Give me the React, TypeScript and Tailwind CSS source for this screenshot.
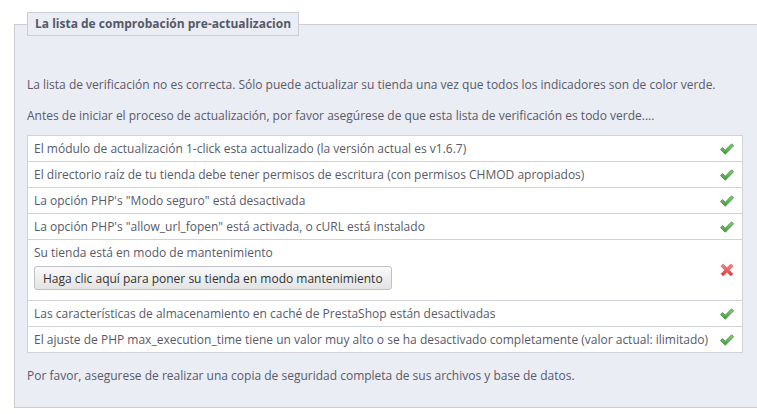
type CheckItem = {
  label: string;
  ok: boolean;
  action?: string;
};

const items: CheckItem[] = [
  { label: "El módulo de actualización 1-click esta actualizado (la versión actual es v1.6.7)", ok: true },
  { label: "El directorio raíz de tu tienda debe tener permisos de escritura (con permisos CHMOD apropiados)", ok: true },
  { label: "La opción PHP's \"Modo seguro\" está desactivada", ok: true },
  { label: "La opción PHP's \"allow_url_fopen\" está activada, o cURL está instalado", ok: true },
  {
    label: "Su tienda está en modo de mantenimiento",
    ok: false,
    action: "Haga clic aquí para poner su tienda en modo mantenimiento",
  },
  { label: "Las características de almacenamiento en caché de PrestaShop están desactivadas", ok: true },
  {
    label: "El ajuste de PHP max_execution_time tiene un valor muy alto o se ha desactivado completamente (valor actual: ilimitado)",
    ok: true,
  },
];

function CheckIcon() {
  return (
    <svg width="16" height="16" viewBox="0 0 16 16">
      <defs>
        <linearGradient id="ok" x1="0" y1="0" x2="0" y2="1">
          <stop offset="0" stopColor="#8fd27c" />
          <stop offset="1" stopColor="#3f9b3a" />
        </linearGradient>
      </defs>
      <path
        d="M1.5 8.6 L3.6 6.6 L6.3 9.2 L12.6 2.8 L14.6 4.8 L6.3 13.2 Z"
        fill="url(#ok)"
        stroke="#3b8a34"
        strokeWidth="0.8"
        strokeLinejoin="round"
      />
    </svg>
  );
}

function CrossIcon() {
  return (
    <svg width="16" height="16" viewBox="0 0 16 16">
      <defs>
        <linearGradient id="ko" x1="0" y1="0" x2="0" y2="1">
          <stop offset="0" stopColor="#f48a8a" />
          <stop offset="1" stopColor="#e03a3a" />
        </linearGradient>
      </defs>
      <path
        d="M2 4.2 L4.2 2 L8 5.8 L11.8 2 L14 4.2 L10.2 8 L14 11.8 L11.8 14 L8 10.2 L4.2 14 L2 11.8 L5.8 8 Z"
        fill="url(#ko)"
        stroke="#d84a4a"
        strokeWidth="0.6"
        strokeLinejoin="round"
      />
    </svg>
  );
}

export default function App() {
  return (
    <div
      className="h-[414px] w-[757px] overflow-hidden bg-white text-[12px] leading-[18px] text-[#585a69]"
      style={{ fontFamily: '"Open Sans", "Liberation Sans", sans-serif' }}
    >
      <fieldset className="ml-[14px] mt-[12px] w-[780px] border border-[#ccced7] bg-[#ebedf4] pb-[22px] pl-3 pr-[36px]">
        <legend className="border border-[#ccced7] bg-[#ebedf4] px-[7px] py-[2px] font-bold text-[#555968]">
          La lista de comprobación pre-actualizacion
        </legend>

        <p className="mt-[40px]">
          La lista de verificación no es correcta. Sólo puede actualizar su tienda una vez que todos los
          indicadores son de color verde.
        </p>
        <p className="mt-[13px]">
          Antes de iniciar el proceso de actualización, por favor asegúrese de que esta lista de verificación es
          todo verde....
        </p>

        <table className="mt-[10px] w-[716px] border-collapse border border-[#d0d2d8] bg-white">
          <tbody>
            {items.map((item) => (
              <tr key={item.label} className="border-b border-[#d0d2d8]">
                <td className="py-[4px] pl-[6px] pr-0 align-middle leading-[17px]">
                  <div className="whitespace-nowrap">{item.label}</div>
                  {item.action && (
                    <button
                      type="button"
                      className="mb-[6px] mt-[5px] h-[24px] rounded-[3px] border border-[#bfc1c6] bg-gradient-to-b from-[#fafafa] to-[#e3e3e3] px-[8px] text-[12px] text-[#333]"
                    >
                      {item.action}
                    </button>
                  )}
                </td>
                <td className="w-[30px] pr-[7px] align-middle">
                  <div className="flex justify-end">{item.ok ? <CheckIcon /> : <CrossIcon />}</div>
                </td>
              </tr>
            ))}
          </tbody>
        </table>

        <p className="mt-[14px]">
          Por favor, asegurese de realizar una copia de seguridad completa de sus archivos y base de datos.
        </p>
      </fieldset>
    </div>
  );
}
